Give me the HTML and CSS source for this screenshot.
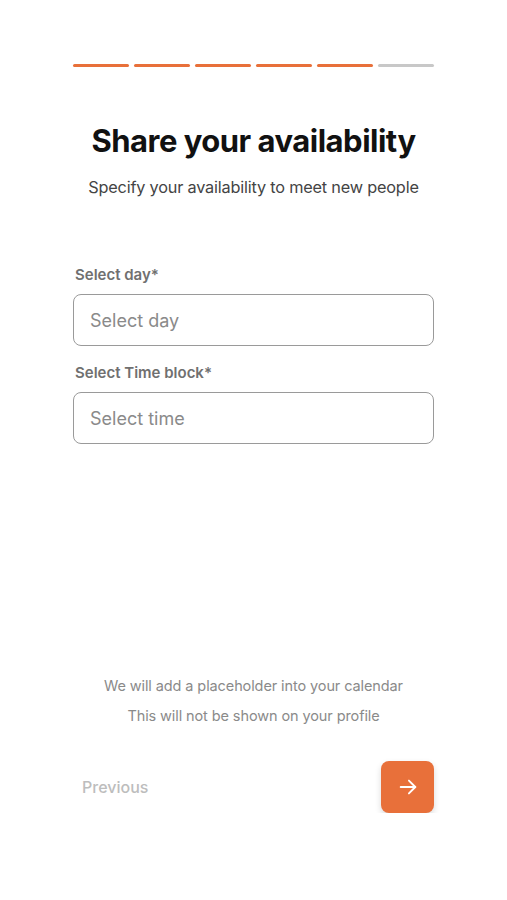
FILE: index.html
```html
<!DOCTYPE html>
<html lang="en">
<head>
  <meta charset="UTF-8">
  <meta name="viewport" content="width=device-width, initial-scale=1">
  <title>Share your availability</title>
  <link rel="stylesheet" href="styles.css">
</head>
<body>
  <div class="screen">
    <!-- Progress steps -->
    <div class="steps">
      <span class="step done"></span>
      <span class="step done"></span>
      <span class="step done"></span>
      <span class="step done"></span>
      <span class="step done"></span>
      <span class="step"></span>
    </div>

    <h1>Share your availability</h1>
    <p class="subtitle">Specify your availability to meet new people</p>

    <div class="form">
      <div class="field">
        <label for="day">Select day*</label>
        <input type="text" id="day" placeholder="Select day">
      </div>
      <div class="field">
        <label for="time">Select Time block*</label>
        <input type="text" id="time" placeholder="Select time">
      </div>
    </div>

    <div class="note">
      <p>We will add a placeholder into your calendar</p>
      <p>This will not be shown on your profile</p>
    </div>

    <div class="nav">
      <button class="prev">Previous</button>
      <button class="next" aria-label="Next">
        <svg width="22" height="22" viewBox="0 0 24 24" fill="none" stroke="#fff" stroke-width="2" stroke-linecap="round" stroke-linejoin="round">
          <line x1="4" y1="12" x2="20" y2="12"></line>
          <polyline points="13 5 20 12 13 19"></polyline>
        </svg>
      </button>
    </div>
  </div>
</body>
</html>
```

FILE: styles.css
```css
body {
  margin: 0;
  background: #ffffff;
  font-family: Inter, "Noto Sans", Arial, sans-serif;
}
.screen {
  width: 361px;
  margin: 0 auto;
  padding-top: 64px;
  display: flex;
  flex-direction: column;
  height: 749px;
}
.steps {
  display: flex;
  gap: 5px;
}
.step {
  flex: 1;
  height: 3px;
  border-radius: 2px;
  background: #c8c8c8;
}
.step.done {
  background: #e8703a;
}
h1 {
  margin: 54px 0 0;
  text-align: center;
  font-size: 31px;
  font-weight: 700;
  letter-spacing: -0.5px;
  color: #111;
  line-height: 40px;
}
.subtitle {
  margin: 15px 0 0;
  text-align: center;
  font-size: 16.3px;
  color: #444;
  letter-spacing: -0.2px;
  line-height: 22px;
}
.form {
  margin-top: 68px;
  display: flex;
  flex-direction: column;
  gap: 18px;
}
.field label {
  display: block;
  margin: 0 0 10px 2px;
  font-size: 15px;
  font-weight: 600;
  color: #707070;
  line-height: 18px;
}
.field input {
  display: block;
  width: 100%;
  box-sizing: border-box;
  height: 52px;
  padding: 0 16px;
  border: 1px solid #9a9a9a;
  border-radius: 8px;
  font-family: inherit;
  font-size: 18px;
  color: #333;
  outline: none;
}
.field input::placeholder {
  color: #8a8a8a;
}
.note {
  margin-top: auto;
  text-align: center;
  font-size: 14.5px;
  color: #8a8a8a;
  letter-spacing: -0.1px;
  line-height: 18px;
}
.note p {
  margin: 0 0 12px;
}
.nav {
  margin-top: 24px;
  display: flex;
  justify-content: space-between;
  align-items: center;
}
.prev {
  border: none;
  background: none;
  padding: 0 0 0 9px;
  font-family: inherit;
  font-size: 16px;
  font-weight: 500;
  color: #bdbdbd;
  cursor: pointer;
}
.next {
  width: 53px;
  height: 52px;
  border: none;
  border-radius: 8px;
  background: #e8703a;
  display: flex;
  align-items: center;
  justify-content: center;
  box-shadow: 0 3px 6px rgba(0, 0, 0, 0.15);
  cursor: pointer;
}
```
